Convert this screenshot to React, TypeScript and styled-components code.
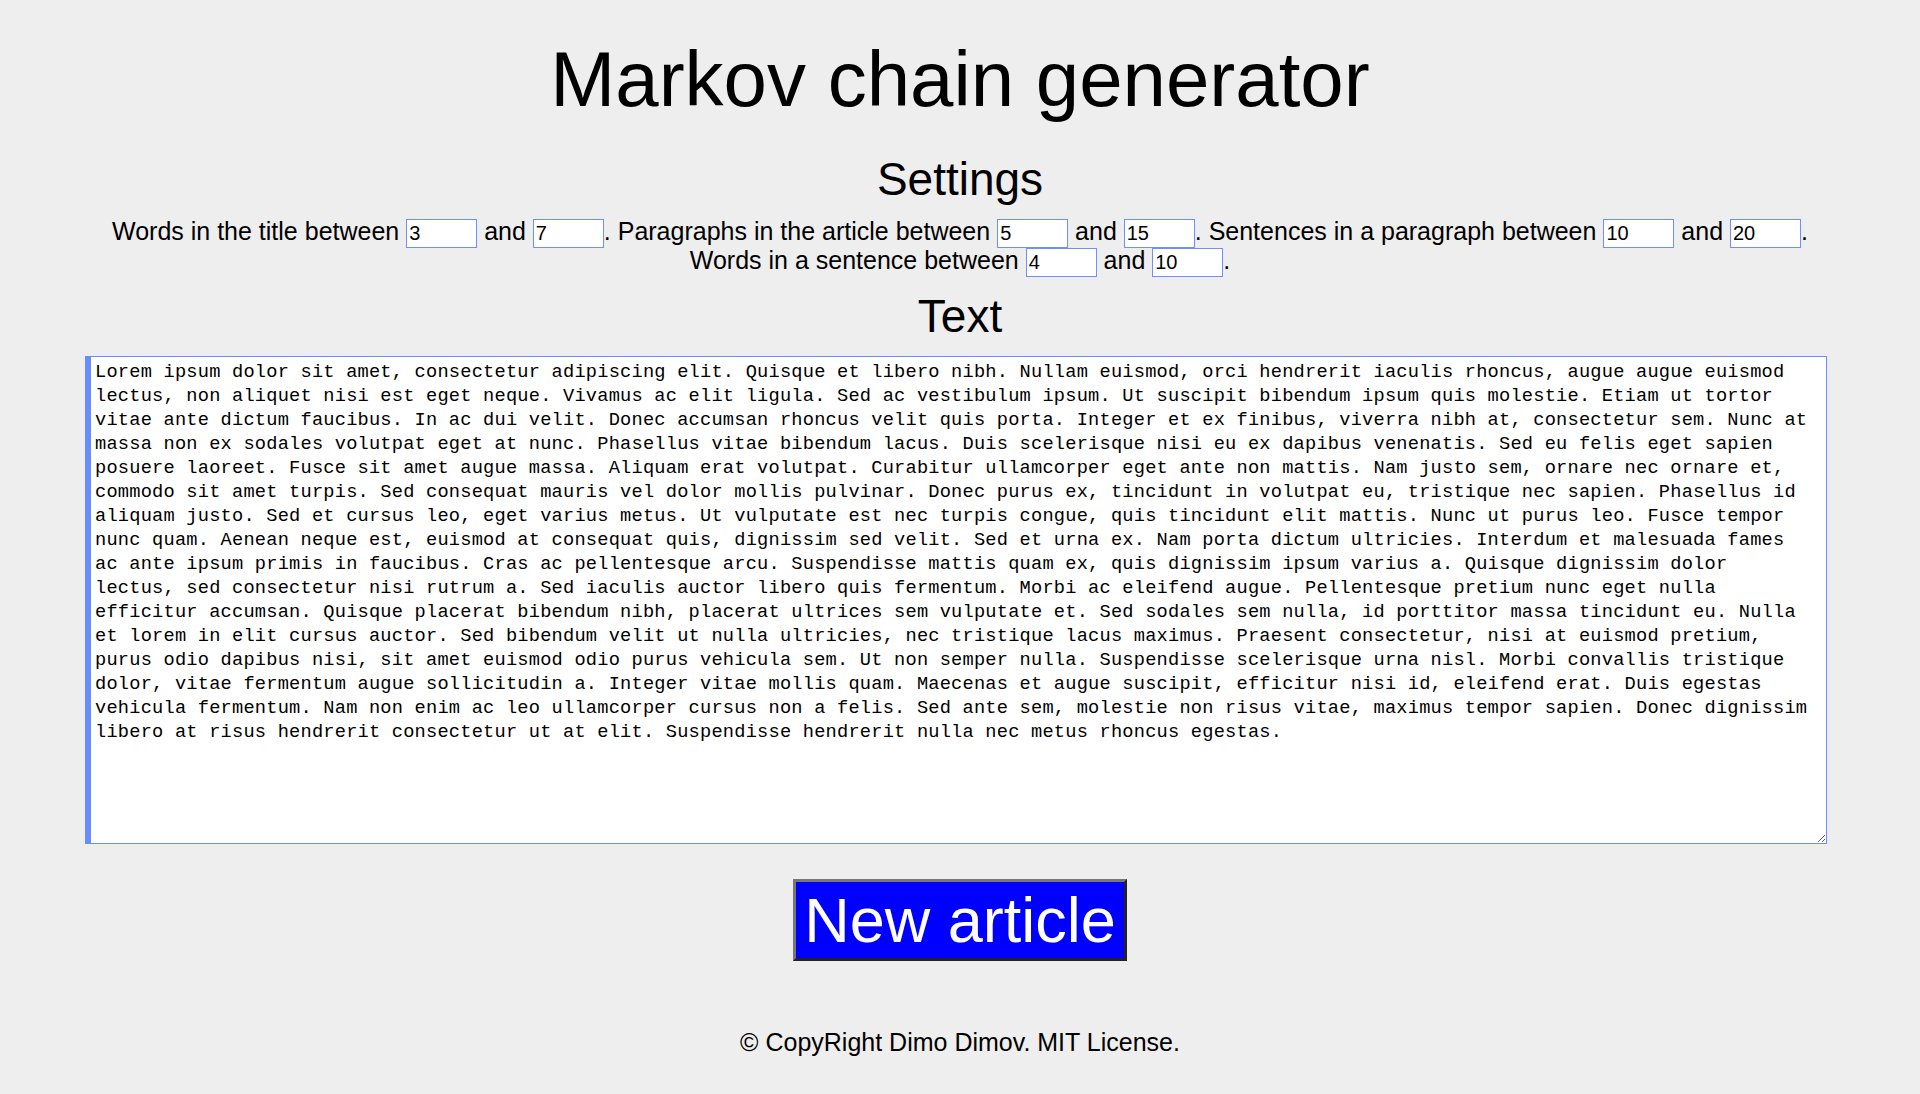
import React from 'react'
import styled, { createGlobalStyle } from 'styled-components'

const GlobalStyle = createGlobalStyle`
    html, body {
        margin: 0;
        padding: 0;
        background-color: #eeeeee;
    }
    body {
        font-family: "Liberation Sans", Arial, sans-serif;
        color: #000;
    }
`

const Page = styled.main`
    display: flex;
    flex-direction: column;
    align-items: center;
    padding-top: 34px;
    box-sizing: border-box;
    min-height: 1094px;
`

const Title = styled.h1`
    margin: 0;
    font-size: 78px;
    font-weight: normal;
    line-height: 90px;
`

const SectionTitle = styled.h2<{ $gap: number }>`
    margin: ${(p) => p.$gap}px 0 0;
    font-size: 46px;
    font-weight: normal;
    line-height: 53px;
`

const Settings = styled.p`
    margin: 13px 0 0;
    max-width: 1740px;
    text-align: center;
    font-size: 25px;
    line-height: 24px;
`

const NumberInput = styled.input`
    box-sizing: border-box;
    width: 71px;
    height: 29px;
    padding: 1px 2px;
    border: 1px solid #6f8fff;
    background-color: #fff;
    color: #000;
    font-family: "Liberation Sans", Arial, sans-serif;
    font-size: 20px;
    outline: none;
    vertical-align: baseline;
`

const TextArea = styled.textarea`
    display: block;
    align-self: flex-start;
    box-sizing: border-box;
    margin: 13px 0 0 85px;
    width: 1742px;
    height: 488px;
    padding: 3px 4px;
    border: 1px solid #6a8cff;
    border-left-width: 6px;
    background-color: #fff;
    color: #000;
    font-family: "Liberation Mono", "DejaVu Sans Mono", monospace;
    font-size: 18.68px;
    letter-spacing: 0.21px;
    line-height: 24px;
    outline: none;
    resize: both;
`

const NewButton = styled.button`
    margin-top: 35px;
    padding: 2px 8px;
    border: 3px solid;
    border-color: #777 #222 #222 #777;
    background-color: #0000ff;
    color: #fff;
    font-family: "Liberation Sans", Arial, sans-serif;
    font-size: 63px;
    line-height: normal;
    cursor: pointer;
`

const Footer = styled.footer`
    margin-top: 67px;
    font-size: 25px;
    line-height: normal;
`

const Range: React.FunctionComponent<{ label: string; from: string; to: string }> = ({
    label,
    from,
    to,
}) => (
    <>
        {label}{' '}
        <NumberInput type="text" defaultValue={from} />
        {' and '}
        <NumberInput type="text" defaultValue={to} />
        {'.'}
    </>
)

const article = [
    'Lorem ipsum dolor sit amet, consectetur adipiscing elit. Quisque et libero nibh. Nullam euismod, orci hendrerit iaculis rhoncus, augue augue euismod',
    'lectus, non aliquet nisi est eget neque. Vivamus ac elit ligula. Sed ac vestibulum ipsum. Ut suscipit bibendum ipsum quis molestie. Etiam ut tortor',
    'vitae ante dictum faucibus. In ac dui velit. Donec accumsan rhoncus velit quis porta. Integer et ex finibus, viverra nibh at, consectetur sem. Nunc at',
    'massa non ex sodales volutpat eget at nunc. Phasellus vitae bibendum lacus. Duis scelerisque nisi eu ex dapibus venenatis. Sed eu felis eget sapien',
    'posuere laoreet. Fusce sit amet augue massa. Aliquam erat volutpat. Curabitur ullamcorper eget ante non mattis. Nam justo sem, ornare nec ornare et,',
    'commodo sit amet turpis. Sed consequat mauris vel dolor mollis pulvinar. Donec purus ex, tincidunt in volutpat eu, tristique nec sapien. Phasellus id',
    'aliquam justo. Sed et cursus leo, eget varius metus. Ut vulputate est nec turpis congue, quis tincidunt elit mattis. Nunc ut purus leo. Fusce tempor',
    'nunc quam. Aenean neque est, euismod at consequat quis, dignissim sed velit. Sed et urna ex. Nam porta dictum ultricies. Interdum et malesuada fames',
    'ac ante ipsum primis in faucibus. Cras ac pellentesque arcu. Suspendisse mattis quam ex, quis dignissim ipsum varius a. Quisque dignissim dolor',
    'lectus, sed consectetur nisi rutrum a. Sed iaculis auctor libero quis fermentum. Morbi ac eleifend augue. Pellentesque pretium nunc eget nulla',
    'efficitur accumsan. Quisque placerat bibendum nibh, placerat ultrices sem vulputate et. Sed sodales sem nulla, id porttitor massa tincidunt eu. Nulla',
    'et lorem in elit cursus auctor. Sed bibendum velit ut nulla ultricies, nec tristique lacus maximus. Praesent consectetur, nisi at euismod pretium,',
    'purus odio dapibus nisi, sit amet euismod odio purus vehicula sem. Ut non semper nulla. Suspendisse scelerisque urna nisl. Morbi convallis tristique',
    'dolor, vitae fermentum augue sollicitudin a. Integer vitae mollis quam. Maecenas et augue suscipit, efficitur nisi id, eleifend erat. Duis egestas',
    'vehicula fermentum. Nam non enim ac leo ullamcorper cursus non a felis. Sed ante sem, molestie non risus vitae, maximus tempor sapien. Donec dignissim',
    'libero at risus hendrerit consectetur ut at elit. Suspendisse hendrerit nulla nec metus rhoncus egestas.',
].join('\n')

export default function App() {
    return (
        <>
            <GlobalStyle />
            <Page>
                <Title>Markov chain generator</Title>
                <SectionTitle $gap={29}>Settings</SectionTitle>
                <Settings>
                    <Range label="Words in the title between" from="3" to="7" />{' '}
                    <Range label="Paragraphs in the article between" from="5" to="15" />{' '}
                    <Range label="Sentences in a paragraph between" from="10" to="20" />{' '}
                    <Range label="Words in a sentence between" from="4" to="10" />
                </Settings>
                <SectionTitle $gap={13}>Text</SectionTitle>
                <TextArea defaultValue={article} spellCheck={false} />
                <NewButton type="button">New article</NewButton>
                <Footer>© CopyRight Dimo Dimov. MIT License.</Footer>
            </Page>
        </>
    )
}
